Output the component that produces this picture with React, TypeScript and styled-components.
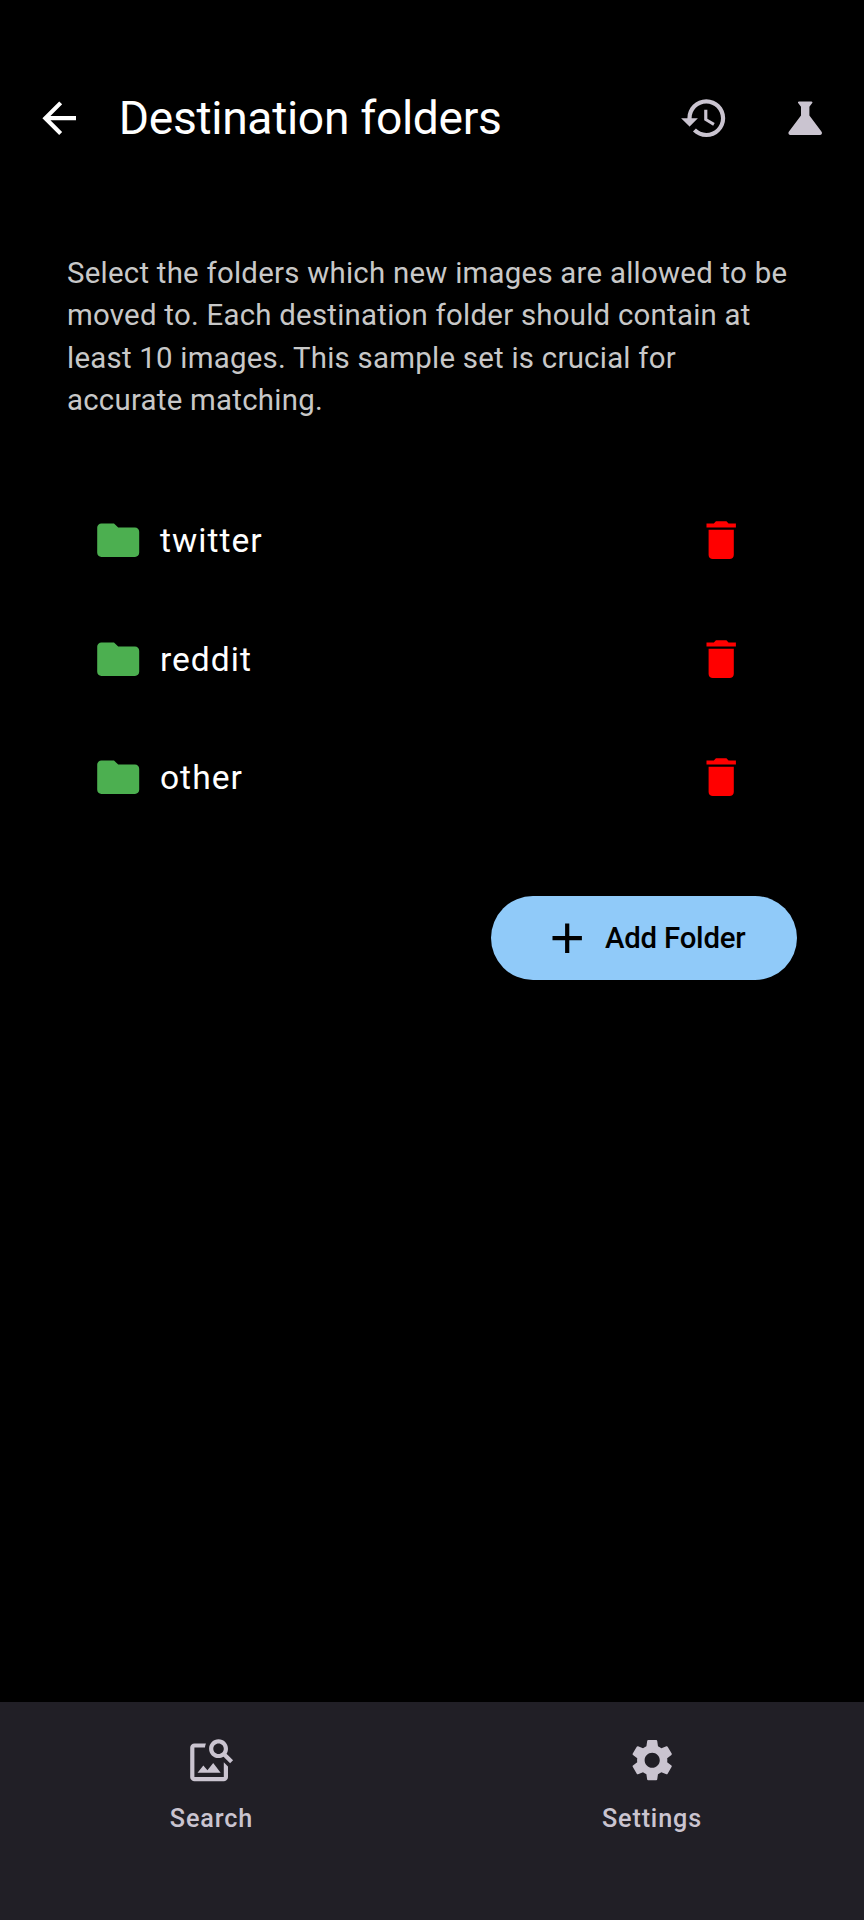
import React from 'react';
import styled, { createGlobalStyle } from 'styled-components';

const GlobalStyle = createGlobalStyle`
  * { box-sizing: border-box; }
  html, body { margin: 0; padding: 0; background: #000; }
  body { font-family: Roboto, sans-serif; color: #fff; }
  button { font: inherit; color: inherit; border: 0; background: none; padding: 0; margin: 0; }
`;

const Screen = styled.div`
  width: 864px;
  height: 1920px;
  background: #000;
  display: flex;
  flex-direction: column;
  overflow: hidden;
`;

const TopBar = styled.header`
  display: flex;
  align-items: center;
  height: 134px;
  margin-top: 51px;
  padding: 0 33.6px 0 34.4px;
`;

const Title = styled.h1`
  flex: 1;
  margin: 0 0 0 34px;
  font-size: 46.2px;
  line-height: 58px;
  font-weight: 400;
  letter-spacing: -0.32px;
  white-space: nowrap;
`;

const IconButton = styled.button<{ $tone?: string }>`
  display: flex;
  color: ${({ $tone }) => $tone ?? 'inherit'};
`;

const Actions = styled.div`
  display: flex;
  gap: 50.6px;
`;

const Icon = styled.svg`
  display: block;
  flex: none;
  width: 50.4px;
  height: 50.4px;
  fill: currentColor;
`;

const Content = styled.main`
  flex: 1;
  display: flex;
  flex-direction: column;
  padding: 66.8px 67px 0;
`;

const Description = styled.p`
  margin: 0;
  font-size: 29.4px;
  line-height: 42.5px;
  letter-spacing: 0.25px;
  color: #c8c8c8;
`;

const FolderList = styled.ul`
  list-style: none;
  margin: 59.3px 0 0;
  padding: 0 50.7px 0 26px;
`;

const FolderRow = styled.li`
  display: flex;
  align-items: center;
  height: 118.5px;
`;

const FolderName = styled.span`
  flex: 1;
  margin-left: 16.5px;
  padding-top: 1.4px;
  font-size: 33.6px;
  line-height: 50px;
  letter-spacing: 1.05px;
`;

const AddButton = styled.button`
  && {
    align-self: flex-end;
    display: flex;
    align-items: center;
    width: 306px;
    height: 84px;
    margin-top: 59.4px;
    padding-left: 50.5px;
    border-radius: 42px;
    background: #90caf9;
    color: #000;
    font-size: 29.4px;
    font-weight: 500;
    letter-spacing: -0.21px;
    white-space: nowrap;
  }
`;

const AddLabel = styled.span`
  margin-left: 13px;
`;

const BottomNav = styled.nav`
  display: flex;
  gap: 17.6px;
  height: 218px;
  padding-right: 0.6px;
  background: #211f26;
`;

const NavItem = styled.button`
  && {
    flex: 1;
    display: flex;
    flex-direction: column;
    align-items: center;
    padding-top: 33px;
    color: #cac4d0;
    font-size: 25.2px;
    line-height: 34px;
    font-weight: 500;
    letter-spacing: 0.85px;
  }
`;

const NavLabel = styled.span`
  margin-top: 16.4px;
`;

const paths = {
  back: 'M20 11H7.83l5.59-5.59L12 4l-8 8 8 8 1.41-1.41L7.83 13H20v-2z',
  history:
    'M13 3c-4.97 0-9 4.03-9 9H1l3.89 3.89.07.14L9 12H6c0-3.87 3.13-7 7-7s7 3.13 7 7-3.13 7-7 7c-1.93 0-3.68-.79-4.94-2.06l-1.42 1.42C8.27 19.99 10.51 21 13 21c4.97 0 9-4.03 9-9s-4.03-9-9-9zm-1 5v5l4.28 2.54.72-1.21-3.5-2.08V8H12z',
  flask:
    'M19.8 18.4 14 10.67V6.5l1.35-1.69c.26-.33.03-.81-.39-.81H9.04c-.42 0-.65.48-.39.81L10 6.5v4.17L4.2 18.4c-.49.66-.02 1.6.8 1.6h14c.82 0 1.29-.94.8-1.6z',
  folder: 'M10 4H4c-1.1 0-1.99.9-1.99 2L2 18c0 1.1.9 2 2 2h16c1.1 0 2-.9 2-2V8c0-1.1-.9-2-2-2h-8l-2-2z',
  trash: 'M6 19c0 1.1.9 2 2 2h8c1.1 0 2-.9 2-2V7H6v12zM19 4h-3.5l-1-1h-5l-1 1H5v2h14V4z',
  plus: 'M19 13h-6v6h-2v-6H5v-2h6V5h2v6h6v2z',
  imageSearch:
    'M18 13v7H4V6h5.02c.05-.71.22-1.38.48-2H4c-1.1 0-2 .9-2 2v14c0 1.1.9 2 2 2h14c1.1 0 2-.9 2-2v-5l-2-2zm-1.5 5h-11l2.75-3.53 1.96 2.36 2.75-3.54L16.5 18zm2.8-9.11c.44-.7.7-1.51.7-2.39C20 4.01 17.99 2 15.5 2S11 4.01 11 6.5s2.01 4.5 4.49 4.5c.88 0 1.7-.26 2.39-.7L21 13.42 22.42 12 19.3 8.89zM15.5 9C14.12 9 13 7.88 13 6.5S14.12 4 15.5 4 18 5.12 18 6.5 16.88 9 15.5 9z',
  settings:
    'M19.14 12.94c.04-.3.06-.61.06-.94 0-.32-.02-.64-.07-.94l2.03-1.58c.18-.14.23-.41.12-.61l-1.92-3.32c-.12-.22-.37-.29-.59-.22l-2.39.96c-.5-.38-1.03-.7-1.62-.94l-.36-2.54c-.04-.24-.24-.41-.48-.41h-3.84c-.24 0-.43.17-.47.41l-.36 2.54c-.59.24-1.13.57-1.62.94l-2.39-.96c-.22-.08-.47 0-.59.22L2.74 8.87c-.12.21-.08.47.12.61l2.03 1.58c-.05.3-.09.63-.09.94s.02.64.07.94l-2.03 1.58c-.18.14-.23.41-.12.61l1.92 3.32c.12.22.37.29.59.22l2.39-.96c.5.38 1.03.7 1.62.94l.36 2.54c.05.24.24.41.48.41h3.84c.24 0 .44-.17.47-.41l.36-2.54c.59-.24 1.13-.56 1.62-.94l2.39.96c.22.08.47 0 .59-.22l1.92-3.32c.12-.22.07-.47-.12-.61l-2.01-1.58zM12 15.6c-1.98 0-3.6-1.62-3.6-3.6s1.62-3.6 3.6-3.6 3.6 1.62 3.6 3.6-1.62 3.6-3.6 3.6z',
};

const Glyph = ({ name }: { name: keyof typeof paths }) => (
  <Icon viewBox="0 0 24 24" aria-hidden="true">
    <path d={paths[name]} />
  </Icon>
);

const folders = ['twitter', 'reddit', 'other'];

export default function App() {
  return (
    <>
      <GlobalStyle />
      <Screen>
        <TopBar>
          <IconButton aria-label="Back">
            <Glyph name="back" />
          </IconButton>
          <Title>Destination folders</Title>
          <Actions>
            <IconButton $tone="#cac4d0" aria-label="History">
              <Glyph name="history" />
            </IconButton>
            <IconButton $tone="#cac4d0" aria-label="Test">
              <Glyph name="flask" />
            </IconButton>
          </Actions>
        </TopBar>
        <Content>
          <Description>
            Select the folders which new images are allowed to be moved to. Each destination folder should contain at
            least 10 images. This sample set is crucial for accurate matching.
          </Description>
          <FolderList>
            {folders.map((name) => (
              <FolderRow key={name}>
                <IconButton as="span" $tone="#4caf50">
                  <Glyph name="folder" />
                </IconButton>
                <FolderName>{name}</FolderName>
                <IconButton $tone="#ff0000" aria-label={`Remove ${name}`}>
                  <Glyph name="trash" />
                </IconButton>
              </FolderRow>
            ))}
          </FolderList>
          <AddButton>
            <Glyph name="plus" />
            <AddLabel>Add Folder</AddLabel>
          </AddButton>
        </Content>
        <BottomNav>
          <NavItem>
            <Glyph name="imageSearch" />
            <NavLabel>Search</NavLabel>
          </NavItem>
          <NavItem>
            <Glyph name="settings" />
            <NavLabel>Settings</NavLabel>
          </NavItem>
        </BottomNav>
      </Screen>
    </>
  );
}
